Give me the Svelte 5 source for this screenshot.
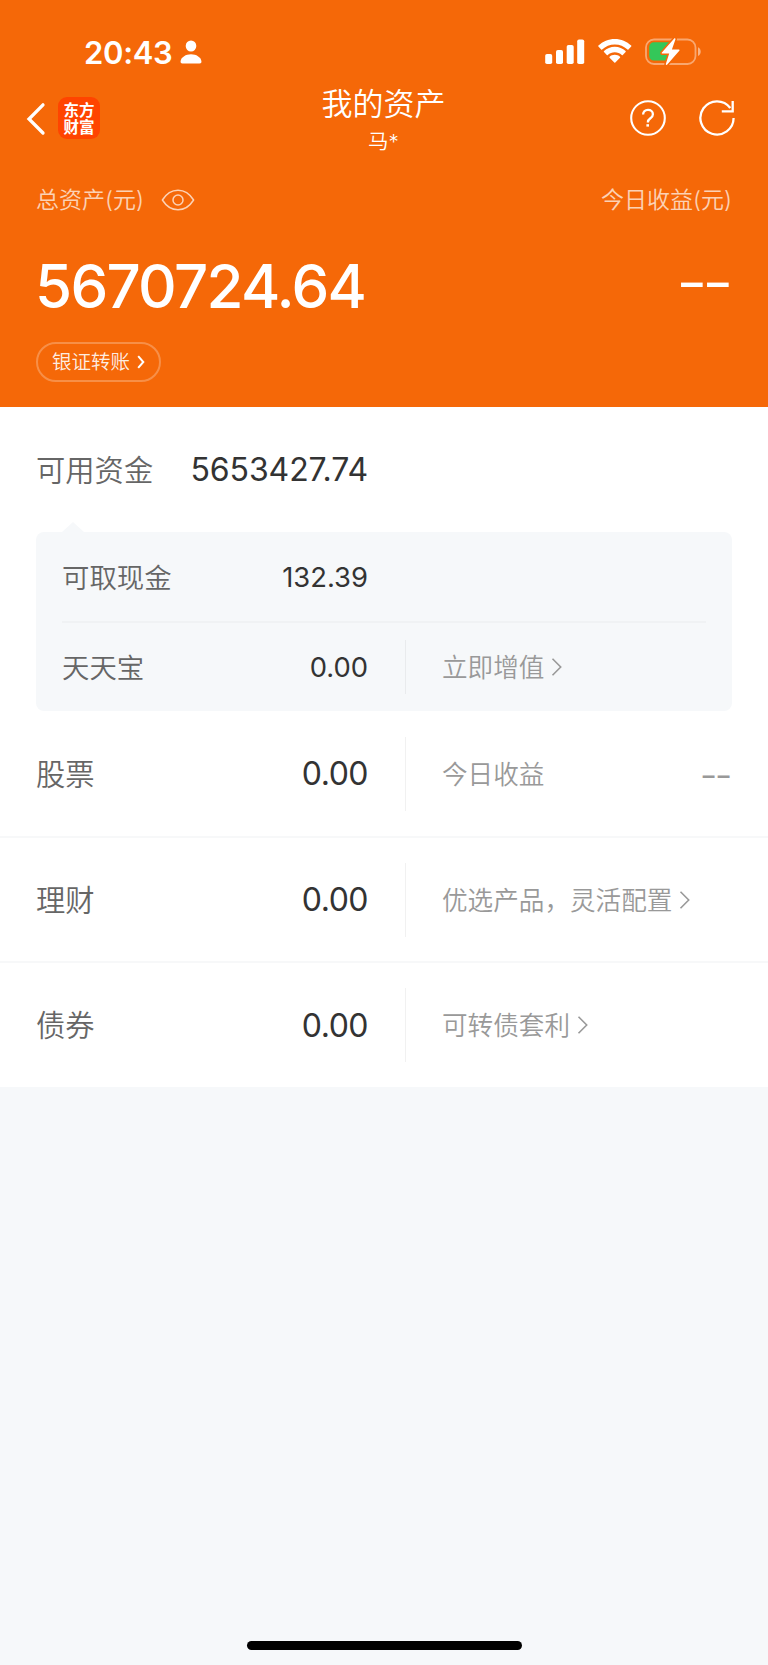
<script>
  const total = '5670724.64';
  const available = '5653427.74';

  const holdings = [
    { name: '股票', amount: '0.00', note: '今日收益', value: '--' },
    { name: '理财', amount: '0.00', note: '优选产品，灵活配置', link: true },
    { name: '债券', amount: '0.00', note: '可转债套利', link: true }
  ];
</script>

{#snippet arrow()}
  <svg class="arrow" width="12" height="20" viewBox="0 0 12 20">
    <path d="M1.500 1.800 9.700 10l-8.200 8.200" fill="none" stroke="#999" stroke-width="1.600" />
  </svg>
{/snippet}

<div class="page">
  <header>
    <div class="status">
      <span class="time">20:43</span>
      <svg class="person" width="22" height="24" viewBox="0 0 22 24">
        <ellipse cx="11" cy="6" rx="5.3" ry="5.6" fill="#fff" />
        <path d="M2.4 23.4C.9 23.4.3 22.4.6 21 1.5 17 5.6 14.2 11 14.2s9.500 2.800 10.400 6.800c.3 1.400-.3 2.400-1.800 2.400z" fill="#fff" />
      </svg>
      <svg class="signal" width="40" height="26" viewBox="0 0 40 26" fill="#fff">
        <rect x="0.200" y="15" width="7" height="10" rx="1.800" />
        <rect x="11" y="11" width="7" height="14" rx="1.800" />
        <rect x="21.700" y="6" width="7" height="19" rx="1.800" />
        <rect x="32.200" y="0.400" width="7" height="24.600" rx="1.800" />
      </svg>
      <svg class="wifi" width="36" height="26" viewBox="0 0 36 26" fill="#fff">
        <path d="M17.800 5.400c4.900 0 9.300 1.900 12.700 5.100.3.300.7.300.9 0l2.800-2.900c.3-.3.3-.7 0-1C29.800 2.500 24.100 0 17.800 0S5.800 2.500 1.400 6.600c-.3.300-.3.700 0 1l2.800 2.900c.2.300.6.300.9 0 3.400-3.200 7.800-5.100 12.700-5.100z" />
        <path d="M17.800 13.200c2.700 0 5.100 1 7 2.700.3.300.7.300 1 0l2.800-2.900c.3-.3.300-.7 0-1-2.800-2.700-6.600-4.300-10.800-4.300S9.800 9.300 7 12c-.3.300-.3.700 0 1l2.800 2.900c.3.300.7.300 1 0 1.900-1.700 4.300-2.700 7-2.700z" />
        <path d="M23 18.700c.3-.3.300-.7 0-1-1.400-1.200-3.200-1.900-5.200-1.900s-3.800.7-5.200 1.900c-.3.300-.3.700 0 1l4.700 4.900c.3.300.7.300 1 0z" />
      </svg>
      <svg class="battery" width="57" height="28" viewBox="0 0 57 28">
        <rect x="1" y="1.500" width="49.500" height="24.500" rx="8" fill="none" stroke="#fff" stroke-opacity=".42" stroke-width="1.800" />
        <path d="M53 9.300c3.600 1.500 3.600 7.300 0 8.800z" fill="#fff" fill-opacity=".5" />
        <path d="M9 4.300h17v18.200H9c-3 0-4.800-2-4.800-5V9.300c0-3 1.800-5 4.800-5z" fill="#34c759" />
        <path d="M29 .7 16.900 14.400c-.5.600-.2 1.200.6 1.200h6.700l-3.300 10.100c-.4 1.300.6 1.700 1.400.8l12-13.800c.6-.6.200-1.200-.5-1.200h-6.900l3.500-10C30.800.3 29.800-.2 29 .7z" fill="#fff" stroke="#f56808" stroke-width="3" paint-order="stroke" />
      </svg>
    </div>

    <nav>
      <div class="brand">
        <svg width="20" height="34" viewBox="0 0 20 34">
          <path d="M17 2.800 3 17l14 14" fill="none" stroke="#fff" stroke-width="3.300" stroke-linecap="round" />
        </svg>
        <div class="logo"><span>东方</span><span>财富</span></div>
      </div>
      <div class="title">
        <h1>我的资产</h1>
        <p>马*</p>
      </div>
      <div class="actions">
        <svg width="38" height="38" viewBox="0 0 38 38" fill="none" stroke="#fff">
          <circle cx="19" cy="19" r="16.800" stroke-width="2.100" />
          <path d="M14.100 15.600c0-2.900 2.100-4.700 4.900-4.700s4.900 1.700 4.900 4.300c0 2-1 3-2.500 4.100-1.700 1.200-2.500 1.900-2.500 4v.3" stroke-width="2.300" />
          <rect x="17.400" y="25.200" width="2.600" height="2.400" fill="#fff" stroke="none" />
        </svg>
        <svg width="38" height="38" viewBox="0 0 38 38" fill="none" stroke="#fff" stroke-width="2.300">
          <path d="M35.600 19A16.600 16.600 0 1 1 32.300 9" />
          <path d="M34.700 2v10.400H23.800" />
        </svg>
      </div>
    </nav>

    <div class="labels">
      <span>总资产(元)</span>
      <svg class="eye" width="34" height="22" viewBox="0 0 34 22" fill="none" stroke="#fff" stroke-opacity=".7" stroke-width="1.500">
        <path d="M1.400 11C9.500-2 24.500-2 32.600 11 24.500 24 9.500 24 1.400 11z" stroke-linejoin="round" />
        <circle cx="17" cy="11" r="5" />
      </svg>
      <span class="today">今日收益(元)</span>
    </div>

    <div class="totals">
      <strong>{total}</strong>
      <span class="dashes">--</span>
    </div>

    <button class="transfer">
      <span>银证转账</span>
      <svg width="8" height="14" viewBox="0 0 8 14">
        <path d="M1.200 1.200 6.300 7l-5.100 5.800" fill="none" stroke="#fff" stroke-width="2" />
      </svg>
    </button>
  </header>

  <main>
    <div class="row available">
      <span class="name">可用资金</span>
      <span class="amount">{available}</span>
    </div>

    <section class="card">
      <div class="row">
        <span class="name">可取现金</span>
        <span class="amount">132.39</span>
      </div>
      <div class="row">
        <span class="name">天天宝</span>
        <span class="amount">0.00</span>
        <div class="side"><span>立即增值</span>{@render arrow()}</div>
      </div>
    </section>

    {#each holdings as item}
      <div class="row holding">
        <span class="name">{item.name}</span>
        <span class="amount">{item.amount}</span>
        <div class="side">
          <span>{item.note}</span>
          {#if item.link}{@render arrow()}{/if}
          {#if item.value}<span class="value">{item.value}</span>{/if}
        </div>
      </div>
    {/each}
  </main>

  <footer><div class="home"></div></footer>
</div>

<style>
  :global(body) {
    background: #f6f8fa;
  }

  .page {
    box-sizing: border-box;
    display: flex;
    flex-direction: column;
    width: 768px;
    height: 1665px;
    background: #f6f8fa;
    font-family: Inter, 'Noto Sans CJK SC', sans-serif;
    font-weight: 350;
    line-height: 1.4;
  }

  header {
    box-sizing: border-box;
    height: 407px;
    background: #f56808;
    color: #fff;
  }

  .status {
    display: flex;
    align-items: center;
    height: 78px;
    padding: 26px 66px 0 84px;
    box-sizing: border-box;
  }

  .time {
    width: 96px;
    padding-top: 2px;
    font-size: 31px;
    font-weight: 600;
    letter-spacing: -0.3px;
    white-space: nowrap;
  }

  .signal {
    margin-left: auto;
  }

  .wifi {
    margin-left: 12px;
  }

  .battery {
    margin-left: 12px;
  }

  nav {
    display: grid;
    grid-template-columns: 1fr auto 1fr;
    align-items: center;
    height: 80px;
    padding: 0 27px 0 26px;
  }

  .brand {
    display: flex;
    align-items: center;
    gap: 12px;
  }

  .brand svg {
    margin-top: 2px;
  }

  .actions {
    display: flex;
    justify-content: flex-end;
    gap: 31px;
    padding-right: 5px;
  }

  .logo {
    display: flex;
    flex-direction: column;
    justify-content: center;
    align-items: center;
    width: 42px;
    height: 42px;
    border-radius: 9px;
    background: #ff4400;
    font-family: 'Noto Sans CJK SC', sans-serif;
    font-size: 15.5px;
    font-weight: 700;
    line-height: 17px;
  }

  .title {
    padding-top: 2px;
    text-align: center;
  }

  h1 {
    margin: 0;
    font-size: 31px;
    font-weight: 350;
    line-height: 44px;
  }

  p {
    margin: 0;
    font-size: 20.5px;
    line-height: 31px;
  }

  .labels {
    display: flex;
    align-items: center;
    height: 30px;
    margin-top: 27px;
    padding: 0 36px;
    font-size: 23px;
  }

  .labels span {
    opacity: 0.7;
  }

  .eye {
    margin-left: 17px;
  }

  .today {
    margin-left: auto;
  }

  .totals {
    display: flex;
    justify-content: space-between;
    align-items: center;
    height: 80px;
    margin-top: 31px;
    padding: 0 36px 0 35px;
  }

  strong {
    font-size: 60px;
    font-weight: 550;
    letter-spacing: -1.7px;
  }

  .dashes {
    margin-right: 4px;
    padding-bottom: 10px;
    font-size: 71px;
    font-weight: 300;
    letter-spacing: -6px;
    line-height: 1;
  }

  .transfer {
    display: flex;
    align-items: center;
    box-sizing: border-box;
    width: 125px;
    height: 40px;
    margin: 16px 0 0 36px;
    padding: 0 0 0 14px;
    border: 2px solid rgba(255, 255, 255, 0.26);
    border-radius: 20px;
    background: none;
    color: rgba(255, 255, 255, 0.9);
    font: inherit;
    font-size: 19.5px;
  }

  .transfer span {
    padding-top: 2px;
  }

  .transfer svg {
    margin-left: 7px;
  }

  main {
    height: 680px;
    background: #fff;
  }

  .row {
    display: grid;
    grid-template-columns: 150px 181px 1fr;
    align-items: center;
    box-sizing: border-box;
    padding: 0 36px;
  }

  .name,
  .amount {
    padding-top: 2px;
  }

  .name {
    color: #666;
    font-size: 29.3px;
    white-space: nowrap;
  }

  .amount {
    margin-right: -1px;
    color: #333;
    font-size: 32px;
    font-weight: 380;
    text-align: right;
  }

  .available {
    height: 125px;
  }

  .available .amount {
    letter-spacing: -0.1px;
  }

  .card {
    position: relative;
    height: 179px;
    margin: 0 36px;
    border-radius: 8px;
    background: #f6f8fa;
  }

  .card::before {
    content: '';
    position: absolute;
    top: -10px;
    left: 26px;
    border: solid transparent;
    border-width: 0 11px 10px;
    border-bottom-color: #f6f8fa;
  }

  .card .row {
    grid-template-columns: 124px 181px 1fr;
    height: 89px;
    margin: 0 26px;
    padding: 0;
  }

  .card .row:first-child {
    padding-top: 1px;
  }

  .card .row + .row {
    border-top: 2px solid #f0f2f4;
    height: 90px;
  }

  .card .name {
    font-size: 27.4px;
  }

  .card .amount {
    padding-top: 0;
    font-size: 27.4px;
  }

  .side {
    display: flex;
    align-items: center;
    height: 74px;
    margin-left: 38px;
    padding-left: 36px;
    border-left: 1px solid #f1f1f1;
    color: #999;
    font-size: 25.6px;
  }

  .side span {
    padding-top: 2px;
  }

  .card .side {
    height: 54px;
    border-left-color: #e9ebed;
  }

  .arrow {
    margin-left: 7px;
  }

  .side .value {
    margin-right: 2px;
    margin-left: auto;
    font-size: 39px;
    font-weight: 300;
    letter-spacing: -2.5px;
    line-height: 1;
  }

  .holding {
    height: 125px;
    border-bottom: 2px solid #f7f8f9;
  }

  .card + .holding {
    height: 127px;
  }

  .holding .amount {
    letter-spacing: -0.5px;
  }

  .holding:last-child {
    height: 124px;
    border-bottom: 0;
  }

  footer {
    display: flex;
    flex: 1;
    justify-content: center;
    align-items: flex-end;
    padding-bottom: 15px;
  }

  .home {
    width: 275px;
    height: 9px;
    border-radius: 5px;
    background: #000;
  }
</style>
